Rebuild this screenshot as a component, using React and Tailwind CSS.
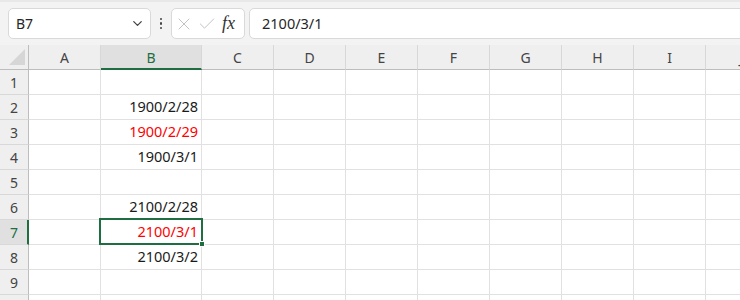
import { ChevronDown, X, Check } from 'lucide-react'

const COLS = ['A', 'B', 'C', 'D', 'E', 'F', 'G', 'H', 'I', 'J']

const DATA = {
  2: { v: '1900/2/28' },
  3: { v: '1900/2/29', red: true },
  4: { v: '1900/3/1' },
  6: { v: '2100/2/28' },
  7: { v: '2100/3/1', red: true },
  8: { v: '2100/3/2' },
}

const FONT = { fontFamily: '"Noto Sans", "Noto Sans CJK JP", sans-serif' }

function Toolbar() {
  return (
    <div className="flex h-[45px] items-center gap-0 overflow-hidden border-t-2 border-[#e8e8e8] bg-[#f3f3f3] pl-2">
      <div className="flex h-[31px] w-[143px] shrink-0 items-center justify-between rounded-[5px] border border-[#d9d9d9] bg-white pl-[7px] pr-[5px]">
        <span className="text-[14px] text-[#262626]">B7</span>
        <ChevronDown size={15} strokeWidth={2} className="text-[#424242]" />
      </div>
      <div className="flex w-[20px] shrink-0 flex-col items-center gap-[2px]">
        <span className="h-[2.5px] w-[2.5px] rounded-full bg-[#444]" />
        <span className="h-[2.5px] w-[2.5px] rounded-full bg-[#444]" />
        <span className="h-[2.5px] w-[2.5px] rounded-full bg-[#444]" />
      </div>
      <div className="flex h-[31px] w-[74px] shrink-0 items-center rounded-[5px] border border-[#d9d9d9] bg-white pl-[2px]">
        <X size={20} strokeWidth={1.1} className="text-[#bdbdbd]" />
        <Check size={20} strokeWidth={1.1} className="ml-[3px] text-[#bdbdbd]" />
        <span
          className="ml-[5px] text-[18px] italic text-[#333]"
          style={{ fontFamily: '"Liberation Serif", serif' }}
        >
          fx
        </span>
      </div>
      <div className="ml-[4px] flex h-[31px] w-[560px] shrink-0 items-center rounded-[5px] border border-[#d9d9d9] bg-white pl-[12px]">
        <span className="text-[14.5px] text-[#262626]">2100/3/1</span>
      </div>
    </div>
  )
}

function HeaderRow() {
  return (
    <>
      <div className="relative h-[25px] border-b border-r border-[#bdbdbd] bg-[#efefef]">
        <svg className="absolute left-[8px] top-[3px]" width="18" height="18" viewBox="0 0 18 18">
          <polygon points="17,1 17,17 1,17" fill="#d6d6d6" />
        </svg>
      </div>
      {COLS.map((c) => {
        const sel = c === 'B'
        return (
          <div
            key={c}
            className={
              sel
                ? 'flex h-[25px] items-center justify-center border-b-2 border-r border-b-[#1e6e42] border-r-[#d8d8d8] bg-[#e0e0e0] pt-[1px] text-[14px] text-[#1e6e42]'
                : 'flex h-[25px] items-center justify-center border-b border-r border-b-[#bdbdbd] border-r-[#d8d8d8] bg-[#efefef] text-[14px] text-[#444]'
            }
          >
            {c}
          </div>
        )
      })}
    </>
  )
}

function Row({ n }) {
  const sel = n === 7
  const d = DATA[n]
  return (
    <>
      <div
        className={
          sel
            ? 'flex h-[25px] items-center justify-center border-b border-r-2 border-b-[#d8d8d8] border-r-[#1e6e42] bg-[#e0e0e0] pl-[1px] text-[14px] text-[#1e6e42]'
            : 'flex h-[25px] items-center justify-center border-b border-r border-b-[#d8d8d8] border-r-[#bdbdbd] bg-[#efefef] text-[14px] text-[#444]'
        }
      >
        {n}
      </div>
      {COLS.map((c) => (
        <div
          key={c}
          className="flex h-[25px] items-center justify-end border-b border-r border-[#e1e1e1] bg-white pr-[3px]"
        >
          {c === 'B' && d && (
            <span className={d.red ? 'text-[14.5px] text-[#ff0000]' : 'text-[14.5px] text-[#1a1a1a]'}>{d.v}</span>
          )}
        </div>
      ))}
    </>
  )
}

export default function App() {
  const rows = [1, 2, 3, 4, 5, 6, 7, 8, 9, 10]
  return (
    <div className="h-[300px] w-[740px] overflow-hidden bg-white" style={FONT}>
      <Toolbar />
      <div className="relative">
        <div className="grid w-[778px] grid-cols-[29px_72px_101px_72px_72px_72px_72px_72px_72px_72px_72px]">
          <HeaderRow />
          {rows.map((n) => (
            <Row key={n} n={n} />
          ))}
        </div>
        <div className="pointer-events-none absolute left-[99px] top-[173px] h-[27px] w-[104px] border-2 border-[#1e6e42]">
          <div className="absolute bottom-[-4px] right-[-4px] h-[6px] w-[6px] border border-white bg-[#1e6e42]" />
        </div>
      </div>
    </div>
  )
}
